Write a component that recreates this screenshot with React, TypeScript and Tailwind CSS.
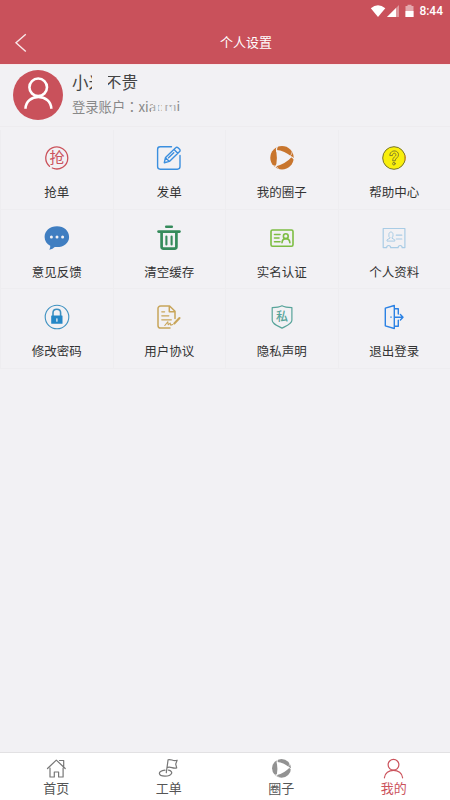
import React from "react";

const sans = "font-['Noto_Sans_CJK_SC','Noto_Sans',sans-serif]";

type IconProps = { children: React.ReactNode; color: string; width?: number };

/* Line icon on a 26 x 26 grid, one unit per pixel. */
function Icon({ children, color, width = 1.2 }: IconProps) {
  return (
    <svg
      className="block h-[26px] w-[26px] shrink-0"
      viewBox="0 0 26 26"
      fill="none"
      stroke={color}
      strokeWidth={width}
      strokeLinecap="round"
      strokeLinejoin="round"
    >
      {children}
    </svg>
  );
}

function GrabIcon() {
  return (
    <Icon color="#cb535c" width={1.3}>
      <path d="M5.5 21.2A11 11 0 1 1 8.3 23M10.2 23.6A11 11 0 0 0 18 22.7" />
      <text x="13" y="18.3" textAnchor="middle" fontSize="15" fill="#cb535c" stroke="none" className={sans}>
        抢
      </text>
    </Icon>
  );
}

function PostIcon() {
  return (
    <Icon color="#3b8fdf" width={1.4}>
      <path d="M15.5 1.8H4.2a2.6 2.6 0 0 0-2.6 2.6v17.2a2.6 2.6 0 0 0 2.6 2.6h17.2a2.6 2.6 0 0 0 2.6-2.6V10.5" />
      <path d="M8.3 17.7l1.2-5.2L19.7 2.7a1.6 1.6 0 0 1 2.3 0l1.6 1.6a1.6 1.6 0 0 1 0 2.3L13.4 16.4zM18 4.4l3.8 3.8M9.5 12.8l3.6 3.5M12.5 12.7l5.2-5" />
    </Icon>
  );
}

/* Disc split into three blades around a play triangle. */
function CircleIcon({ color, gap, small }: { color: string; gap: string; small?: boolean }) {
  return (
    <svg className={small ? "block h-[21px] w-[21px]" : "block h-[26px] w-[26px]"} viewBox="0 0 26 26">
      <circle cx="13" cy="12.8" r="11.7" fill={color} />
      <path d="M7.2 5Q15.5 5.4 22.8 12Q16.5 18.8 7.2 21.2Q8.6 13 7.2 5Z" fill={gap} />
      <path d="M8.6 .5Q7 3.5 7.8 7M7.8 19.5Q7 21.8 5 23.5M20 11Q23.4 11.6 25.2 14.2" fill="none" stroke={gap} strokeWidth="1.2" />
      <path d="M3.5 20.5Q7 20.5 9.5 23.5M20.5 11.5Q23.3 9.5 23.3 6" fill="none" stroke={gap} strokeWidth=".7" />
    </svg>
  );
}

function HelpIcon() {
  return (
    <Icon color="#77742b" width={1}>
      <circle cx="13" cy="13" r="11.3" fill="#f9ef0c" />
      <path
        d="M8.8 10.2C8.8 4.5 17.5 4.6 17.5 9.7c0 3.2-3.3 3.2-3.3 6.1h-2.5c0-4.2 3.2-3.8 3.2-6.1 0-2.2-3.5-2.1-3.5.5z"
        strokeWidth="0.9"
      />
      <circle cx="12.9" cy="18.7" r="1.3" strokeWidth="0.9" />
      <path d="M23.9 10.5l.5 1.5M24.3 13.6l-.3 1.5" stroke="#e49d2d" strokeWidth="1.3" />
    </Icon>
  );
}

function FeedbackIcon() {
  return (
    <Icon color="none">
      <path
        d="M13 1.2C5.8 1.2.6 5.9.6 11.9c0 3.9 2.2 7 5.6 8.9.1 1.6-.2 2.8-.9 4 2.5-.5 4.2-1.6 5.5-2.8 8.2.9 14.3-3.6 14.3-10.1C25.1 5.9 20 1.2 13 1.2z"
        fill="#407ec1"
      />
      <circle cx="7.4" cy="12" r="1.5" fill="#f2f1f4" />
      <circle cx="13" cy="12" r="1.5" fill="#f2f1f4" />
      <circle cx="18.6" cy="12" r="1.5" fill="#f2f1f4" />
    </Icon>
  );
}

function TrashIcon() {
  return (
    <Icon color="#358b5b" width={2.7}>
      <path d="M10.2 1.8h5.6" strokeWidth="2.5" />
      <path d="M2.5 6.6h21" strokeWidth="2.6" />
      <path d="M5.6 7.5v14.3c0 1.2.6 1.8 1.8 1.8h11.2c1.2 0 1.8-.6 1.8-1.8V7.5" />
      <path d="M10.4 11.5v8M15.6 11.5v8" strokeWidth="2.1" />
    </Icon>
  );
}

function VerifyIcon() {
  return (
    <Icon color="#7dbd43" width={1.6}>
      <rect x="2" y="5" width="22" height="16.2" rx="1.5" />
      <path d="M5.5 9.5h5.5M5.5 13h4.5M5.5 16.7h5.5" />
      <circle cx="16.8" cy="11.2" r="2.4" />
      <path d="M13 17.7c.4-5.5 7.5-5.5 7.9 0" />
    </Icon>
  );
}

function ProfileIcon() {
  return (
    <Icon color="#a9cce5" width={1.2}>
      <path d="M2.2 3.5h21.7v19.1h-2.7c-.2-2.8-3.9-2.8-4.1 0H9.7c-.2-2.8-3.9-2.8-4.1 0H2.2zM15.3 10.2h5.5M15.3 14h5.5" />
      <path d="M7.9 11.1V9.4c0-3.2 4.1-3.2 4.1 0v1.7l-1.1 2 2.9 1.8v1.2H6v-1.2l2.9-1.8z" strokeWidth="1" />
    </Icon>
  );
}

function PasswordIcon() {
  return (
    <Icon color="#3d91c1" width={1.1}>
      <circle cx="13" cy="13" r="11.8" />
      <path d="M9 12V8.8c0-4.8 7.6-4.8 7.6 0V12" strokeWidth="1.6" />
      <rect x="7.2" y="11.5" width="11.3" height="8.3" rx="0.5" fill="#2587c6" stroke="none" />
      <path d="M12.9 14.8v2.4" stroke="#f2f1f4" strokeWidth="1.3" />
    </Icon>
  );
}

function AgreementIcon() {
  return (
    <Icon color="#c8a55a" width={1.5}>
      <path d="M14 24H4.6a2.6 2.6 0 0 1-2.6-2.6V4.6A2.6 2.6 0 0 1 4.6 2h9l5.4 5.3v7.2M13.3 2.5v5.2h5.2" />
      <path d="M5.8 7.8h2.8M5.8 11.8h7M5.8 15.8h9.5" strokeWidth="1.3" />
      <path d="M8.8 21.5l3-3.7.4 3 2-1.7.5 2 2-.6" strokeWidth="1.1" />
      <path d="M18.3 19.5l5.2-5.5" strokeWidth="2.1" />
    </Icon>
  );
}

function PrivacyIcon() {
  return (
    <Icon color="#58a49a" width={1.2}>
      <path d="M13 1.8c-2.6 1.4-6 1.8-9.8 1.8v12.6c0 3.6 4.6 5.2 9.8 7.9 5.2-2.7 9.9-4.3 9.9-7.9V3.6C19 3.6 15.6 3.2 13 1.8z" />
      <text x="13" y="17" textAnchor="middle" fontSize="12" fontWeight="500" fill="#58a49a" stroke="none" className={sans}>
        私
      </text>
    </Icon>
  );
}

function LogoutIcon() {
  return (
    <Icon color="#2c82e4" width={1.4}>
      <path d="M4.3 4.2l9-2.7v23l-9-2.7z" />
      <path d="M14 4.7h3.3v5.4M17.3 16.1v6.1H14M14 13.2h7.5M19.4 10.5l2.6 2.7-2.6 2.7" />
      <path d="M10 13v.3" />
    </Icon>
  );
}

const tiles = [
  { label: "抢单", icon: <GrabIcon /> },
  { label: "发单", icon: <PostIcon /> },
  { label: "我的圈子", icon: <CircleIcon color="#c8752d" gap="#f2f1f4" /> },
  { label: "帮助中心", icon: <HelpIcon /> },
  { label: "意见反馈", icon: <FeedbackIcon /> },
  { label: "清空缓存", icon: <TrashIcon /> },
  { label: "实名认证", icon: <VerifyIcon /> },
  { label: "个人资料", icon: <ProfileIcon /> },
  { label: "修改密码", icon: <PasswordIcon /> },
  { label: "用户协议", icon: <AgreementIcon /> },
  { label: "隐私声明", icon: <PrivacyIcon /> },
  { label: "退出登录", icon: <LogoutIcon /> },
];

function NavIcon({ children, color }: { children: React.ReactNode; color: string }) {
  return (
    <svg
      className="block h-[21px] w-[21px]"
      viewBox="0 0 21 21"
      fill="none"
      stroke={color}
      strokeWidth="1.2"
      strokeLinejoin="round"
      strokeLinecap="round"
    >
      {children}
    </svg>
  );
}

const nav = [
  {
    label: "首页",
    active: false,
    icon: (
      <NavIcon color="#777777">
        <path d="M1.5 10.5l8.8-8.4 8.9 8.4M13.5 2.5h4.2v6M4 10v9h4.3v-5h4.3v5h4.5v-9" />
      </NavIcon>
    ),
  },
  {
    label: "工单",
    active: false,
    icon: (
      <NavIcon color="#777777">
        <path d="M8.3 14.7l1.8-13c3.2-1 4.9 2 9 .5l-1.4 3.9 1 3.8c-4 1.2-5.5-1.6-9-.5M7 12.1c-8.2.8-6.8 6 0 6.1 7.2 0 9-5 3.5-6" />
      </NavIcon>
    ),
  },
  { label: "圈子", active: false, icon: <CircleIcon color="#929292" gap="#ffffff" small /> },
  {
    label: "我的",
    active: true,
    icon: (
      <NavIcon color="#cb535c">
        <circle cx="10.5" cy="6.8" r="5.4" />
        <path d="M1.4 19.8c.5-10 17.7-10 18.2 0" />
      </NavIcon>
    ),
  },
];

function StatusBar() {
  return (
    <div className="flex h-[22px] items-center justify-end pr-[7px]">
      <svg className="block h-[14px] w-[46px]" viewBox="0 0 46 14" fill="#fff">
        <path d="M1.8 4.3Q9-1.9 16.3 4.3L9 13z" />
        <path d="M30 1v12H18z" opacity=".4" />
        <path d="M27 4V13H18z" />
        <path d="M36.5 2h2V.7h4V2h2v11h-8z" opacity=".5" />
        <path d="M36.5 7h8v6h-8z" />
      </svg>
      <span className="ml-[4px] font-['Roboto',sans-serif] text-[12px] leading-none font-medium">8:44</span>
    </div>
  );
}

export default function App() {
  return (
    <div className={`flex h-[800px] w-[450px] flex-col bg-[#f2f1f4] text-[#333] ${sans}`}>
      <header className="h-16 shrink-0 bg-[#c9515b] text-white">
        <StatusBar />
        <div className="flex h-[41px] items-center">
          <svg className="ml-[14px] block h-5 w-[14px]" viewBox="0 0 14 20" fill="none" stroke="#f9e8ea" strokeWidth="1.4">
            <path d="M11.8 1.3L2 9.8l9.8 8.8" />
          </svg>
          <h1 className="-mt-px ml-[192px] text-[13px] leading-5 font-normal">个人设置</h1>
        </div>
      </header>

      <section className="flex h-[62px] shrink-0 border-t border-[#f7e9ec] pl-[13px]">
        <svg className="mt-[5px] block h-[50px] w-[50px]" viewBox="0 0 50 50" fill="none">
          <circle cx="25" cy="25" r="25" fill="#c9515b" />
          <circle cx="25.2" cy="17.3" r="8.8" stroke="#fff" strokeWidth="2.6" />
          <path d="M12.5 38.8c.2-15.8 25.6-15.8 25.8 0" stroke="#fff" strokeWidth="2.6" />
        </svg>
        <div className="relative ml-[9px] w-[130px] pt-[5px]">
          <div className="text-[16.5px] leading-[24px] text-[#444]">小米不贵</div>
          <div className="mt-[3px] text-[13.3px] leading-[20px] whitespace-nowrap text-[#888]">
            登录账户<span className="font-['Noto_Sans_CJK_TC',sans-serif]" lang="zh-TW">：</span>xiaomi
          </div>
          <svg className="absolute top-0 left-0 h-[60px] w-[130px]" viewBox="0 0 130 60" fill="#f2f1f4">
            <path d="M20 7h14v20H20zM33 7h16v4H33zM33 11h3v16h-3zM46 20h4v7h-4zM37 24h14v3H37zM57 24h8v3h-8z" />
            <path d="M81 34h22v6H81zM79 46h30v3H79zM84 38h2v8h-2zM90 40h2v6h-2zM97 42h2v4h-2z" />
            <path d="M79 38h25v8H79z" opacity=".35" />
          </svg>
        </div>
      </section>

      <main className="grid shrink-0 grid-cols-4 grid-rows-[80px_79px_80px] border-t border-[#eeecef] pt-[3px]">
        {tiles.map((tile) => (
          <button
            key={tile.label}
            className="flex flex-col items-center border-b border-l border-[#eeedf0] pt-[15px]"
          >
            {tile.icon}
            <span className="mt-[11px] text-[12.5px] leading-5">{tile.label}</span>
          </button>
        ))}
      </main>

      <div className="flex-1" />

      <nav className="grid h-12 shrink-0 grid-cols-4 border-t border-[#e2e1e3] bg-white">
        {nav.map((item) => (
          <button
            key={item.label}
            className={`flex flex-col items-center pt-[5px] ${item.active ? "text-[#cb535c]" : "text-[#555]"}`}
          >
            {item.icon}
            <span className="text-[13px] leading-[18px]">{item.label}</span>
          </button>
        ))}
      </nav>
    </div>
  );
}
